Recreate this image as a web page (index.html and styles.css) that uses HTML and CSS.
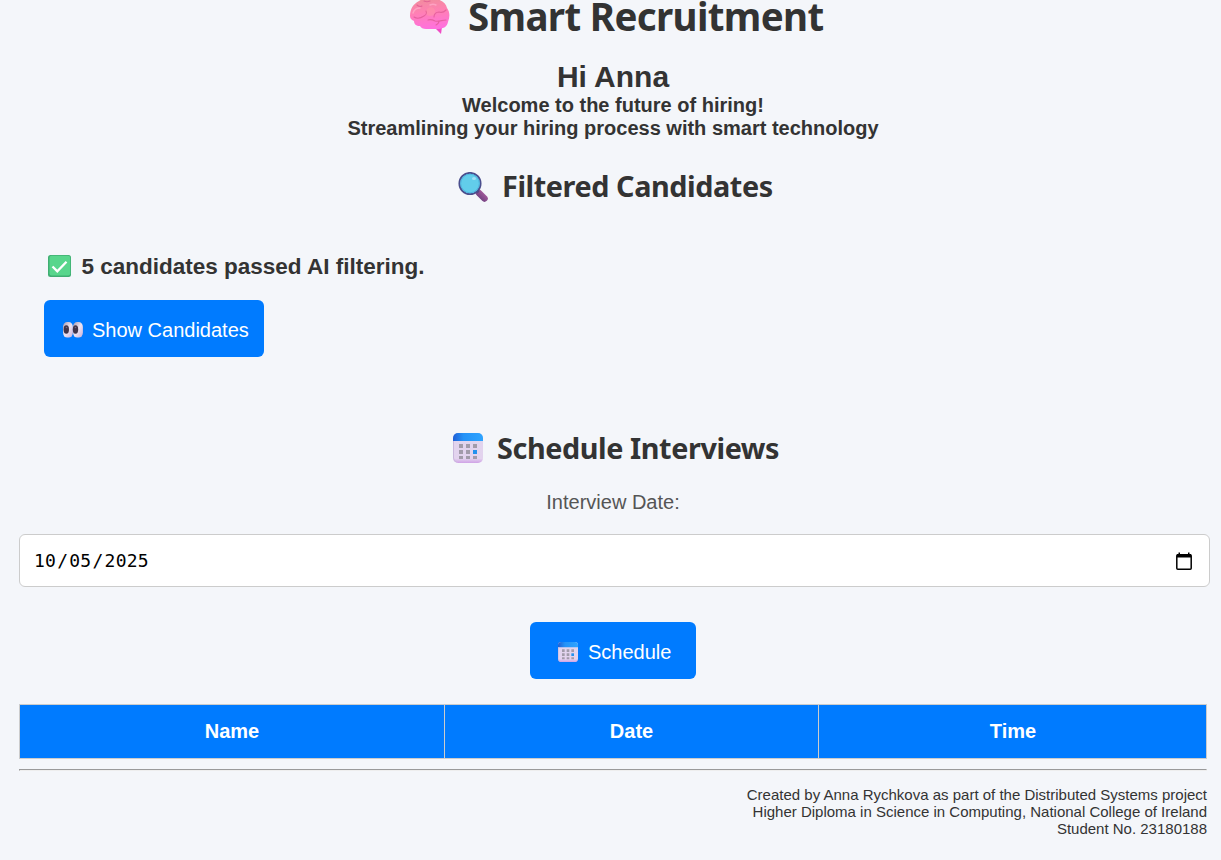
FILE: index.html
```html
<!DOCTYPE html>
<html lang="en">
<head>
<meta charset="utf-8">
<title>Smart Recruitment</title>
<link rel="stylesheet" href="styles.css">
</head>
<body>
<svg class="defs" aria-hidden="true">
  <defs>
    <linearGradient id="calTop" x1="0" x2="1"><stop offset="0" stop-color="#1f5fd6"/><stop offset=".35" stop-color="#2492f7"/><stop offset="1" stop-color="#2ea4ff"/></linearGradient>
    <linearGradient id="calBody" x1="0" y1="0" x2="0" y2="1"><stop offset="0" stop-color="#e0d5ee"/><stop offset=".85" stop-color="#e3d3ee"/><stop offset="1" stop-color="#cfa2e6"/></linearGradient>
    <linearGradient id="brainFill" x1=".3" y1="0" x2=".45" y2="1"><stop offset="0" stop-color="#f08e9c"/><stop offset=".45" stop-color="#ff80b4"/><stop offset="1" stop-color="#ff70de"/></linearGradient>
    <linearGradient id="handle" x1="0" y1="1" x2="1" y2="0"><stop offset="0" stop-color="#704080"/><stop offset="1" stop-color="#a35a9b"/></linearGradient>
    <linearGradient id="eyeFill" x1="0" y1="0" x2="1" y2="1"><stop offset="0" stop-color="#a899ad"/><stop offset=".5" stop-color="#eee4f2"/><stop offset="1" stop-color="#c8afd9"/></linearGradient>
    <symbol id="calendar" viewBox="0 0 30 30">
      <rect width="30" height="30" rx="5" fill="url(#calBody)"/>
      <path d="M0 8V5a5 5 0 0 1 5-5h20a5 5 0 0 1 5 5v3z" fill="url(#calTop)"/>
      <path d="M.5 8v17a4.500 4.500 0 0 0 3 4" fill="none" stroke="#c9b8dc"/>
      <g fill="#a29baa"><path d="M6 11h4v4H6zM13 11h4v4h-4zM20 11h4v4h-4zM6 17h4v4H6zM13 17h4v4h-4zM6 23h4v3H6zM13 23h4v3h-4zM20 23h4v3h-4z"/></g>
      <path d="M20 17h4v4h-4z" fill="#2391ee"/>
    </symbol>
  </defs>
</svg>
<main class="page">
  <h1 class="title">
    <svg class="brain" viewBox="0 0 40 36">
      <path d="M25 29l6 6 1-7z" fill="#f04cc4"/>
      <path d="M0 17C0 10 3 5 9 2c4-3 10-3 15-2 7 0 12 4 13 9 3 4 3 9 1 14-1 5-5 7-11 7H16c-3 0-5-1-6-3-4 0-6-2-6-5-2-1-4-2-4-5z" fill="url(#brainFill)"/>
      <path d="M17 10c3-3 7-2 8 1s-1 6-5 6-5-4-3-7z" fill="#ff9aa6" opacity=".45"/>
      <g fill="none" stroke="#dc5590" stroke-width="1.100" stroke-linecap="round" opacity=".7"><path d="M7 6c1 1 3 2 5 1M14 2c2 1 4 1 6 0M4 18c3 2 7 1 10-1 2-1 3-3 2-5M24 18c0-3 2-5 5-5 3 1 5 0 7-2M18 21c3-1 5 0 7 1 4 1 7-1 11-1M29 22c0 2-1 3-3 4"/></g>
      <path d="M3 14c1-3 4-5 7-5M20 6c2-1 4-1 6 0" fill="none" stroke="#ffa9c8" stroke-width="1.500" stroke-linecap="round" opacity=".8"/>
    </svg>
    <span class="title-text">Smart Recruitment</span>
  </h1>
  <header class="welcome">
    <div class="hello">Hi Anna</div>
    <div>Welcome to the future of hiring!</div>
    <div>Streamlining your hiring process with smart technology</div>
  </header>
  <h2 class="heading heading-filtered">
    <svg class="icon magnifier" viewBox="0 0 30 30">
      <path d="M21 21l5.500 5.500" stroke="url(#handle)" stroke-width="6.500" stroke-linecap="round"/>
      <path d="M18.500 18.500l2 2" stroke="#5b4380" stroke-width="3"/>
      <circle cx="12" cy="11.500" r="10.700" fill="#62cdea" stroke="#4a4e8d" stroke-width="1.700"/>
      <circle cx="12" cy="11.500" r="9.300" fill="none" stroke="#50b5df" stroke-width="1"/>
      <ellipse cx="16" cy="6.500" rx="2" ry="1.600" fill="#9fe0f5"/>
    </svg>
    <span class="filtered-text">Filtered Candidates</span>
  </h2>
  <section class="candidates">
    <p class="result">
      <svg class="check" viewBox="0 0 23 22">
        <rect width="23" height="22" rx="2.500" fill="#3fae72"/>
        <rect x="1.500" y=".8" width="20.700" height="19.700" rx="2" fill="#58d68c"/>
        <path d="M4.500 11.500l4.800 4.800L18.500 6.800" fill="none" stroke="#fff" stroke-width="2.300"/>
      </svg>
      <span class="result-text">5 candidates passed AI filtering.</span>
    </p>
    <button class="btn btn-show">
      <svg class="eyes" viewBox="0 0 20 16">
        <rect width="9.900" height="15.600" rx="4.200" ry="5" fill="url(#eyeFill)"/>
        <rect x="10" width="9.900" height="15.600" rx="4.200" ry="5" fill="url(#eyeFill)"/>
        <ellipse cx="3.300" cy="7.500" rx="2.700" ry="4.200" fill="#40344a"/>
        <ellipse cx="12.500" cy="7.500" rx="2.700" ry="4.200" fill="#40344a"/>
        <circle cx="3.500" cy="5.500" r=".8" fill="#756a80"/><circle cx="12.500" cy="5.500" r=".8" fill="#756a80"/>
      </svg>
      <span>Show Candidates</span>
    </button>
  </section>
  <h2 class="heading heading-schedule">
    <svg class="icon"><use href="#calendar"/></svg>
    <span class="schedule-text">Schedule Interviews</span>
  </h2>
  <div class="label">Interview Date:</div>
  <div class="date-field">
    <span class="date-value">10<i class="sep">/</i>05<i class="sep">/</i>2025</span>
    <svg class="picker" viewBox="0 0 16 18">
      <rect x=".8" y="2.800" width="14.400" height="14.400" rx="1" fill="none" stroke="#000" stroke-width="1.500"/>
      <path d="M1 2h14v3.500H1zM2.500 .5h1.500V3H2.500zM12 .5h1.500V3H12z"/>
    </svg>
  </div>
  <button class="btn btn-schedule">
    <svg class="icon-small" viewBox="0 0 30 30"><use href="#calendar"/></svg>
    <span>Schedule</span>
  </button>
  <table class="interviews">
    <colgroup><col class="col-name"><col class="col-date"><col class="col-time"></colgroup>
    <tr><th>Name</th><th>Date</th><th class="th-time">Time</th></tr>
  </table>
  <hr class="rule">
  <footer class="footer">
    <div>Created by Anna Rychkova as part of the Distributed Systems project</div>
    <div>Higher Diploma in Science in Computing, National College of Ireland</div>
    <div>Student No. 23180188</div>
  </footer>
</main>
</body>
</html>
```
FILE: styles.css
```css
* { box-sizing: border-box; }
html, body { height: 100%; }
body {
  margin: 0;
  overflow: hidden;
  background: #f4f6fa;
  color: #333;
  font: 20px/23px Arial, "Liberation Sans", sans-serif;
}
svg { display: block; flex: none; }
.defs { position: absolute; width: 0; height: 0; }
.page {
  display: flex;
  flex-direction: column;
  padding: 0 14px 0 19px;
}
.title, .heading {
  display: flex;
  align-items: center;
  margin: 0;
  font-family: "Segoe UI", "Noto Sans", sans-serif;
  font-weight: 700;
  white-space: nowrap;
}
.title { height: 31px; padding-left: 391px; gap: 18px; font-size: 38.500px; line-height: 31px; }
.title-text { padding-top: 2px; letter-spacing: -0.65px; }
.brain { width: 40px; height: 36px; margin-top: 2px; }
.welcome { margin-top: 29px; text-align: center; font-weight: 700; }
.hello { font-size: 30px; line-height: 34px; }
.heading { height: 41px; gap: 14px; font-size: 28.800px; line-height: 41px; letter-spacing: -0.42px; }
.heading-filtered { margin-top: 25px; padding-left: 439px; }
.magnifier { margin-top: 2px; }
.heading-schedule { margin-top: 70px; padding-left: 434px; }
.heading span { margin-top: -1px; }
.icon { width: 30px; height: 30px; }
.candidates { padding: 47px 25px 0; }
.result {
  display: flex;
  align-items: center;
  gap: 10px;
  height: 26px;
  margin: 0 0 21px;
  padding-left: 4px;
  font-size: 22.500px;
  line-height: 26px;
  font-weight: 700;
}
.result-text { padding: 2px 0 0 0.5px; }
.check { width: 23px; height: 22px; }
.btn {
  display: flex;
  align-items: center;
  height: 57px;
  border: 0;
  border-radius: 6px;
  background: #007bff;
  color: #fff;
  font: inherit;
  white-space: nowrap;
}
.btn span { padding-top: 4px; }
.btn-show { width: 220px; padding: 0 0 0 19px; gap: 9px; }
.eyes { width: 20px; height: 16px; margin-top: 3px; }
.label { margin-top: 23px; text-align: center; color: #555; }
.date-field {
  display: flex;
  align-items: center;
  justify-content: space-between;
  width: 1191px;
  height: 53px;
  margin-top: 20px;
  padding: 0 17px 0 14px;
  border: 1px solid #ccc;
  border-radius: 6px;
  background: #fff;
  color: #000;
}
.date-value { font: 18px/23px Consolas, "DejaVu Sans Mono", monospace; letter-spacing: 0.25px; }
.sep { padding: 0 1px; font-style: normal; }
.picker { width: 16px; height: 18px; }
.btn-schedule { align-self: center; width: 166px; margin-top: 35px; padding: 0 0 0 28px; gap: 10px; }
.icon-small { width: 20px; height: 20px; margin-top: 3px; }
.interviews {
  width: 1188px;
  height: 55px;
  margin-top: 25px;
  border-collapse: collapse;
  table-layout: fixed;
}
.interviews th { padding: 0; border: 1px solid #ccc; background: #007bff; color: #fff; }
.interviews .th-time { padding-left: 1px; }
.col-name { width: 425px; }
.col-date { width: 374px; }
.rule { width: 100%; margin: 10px 0 0; }
.footer { margin-top: 15px; text-align: right; font-size: 15px; line-height: 17px; }
```
